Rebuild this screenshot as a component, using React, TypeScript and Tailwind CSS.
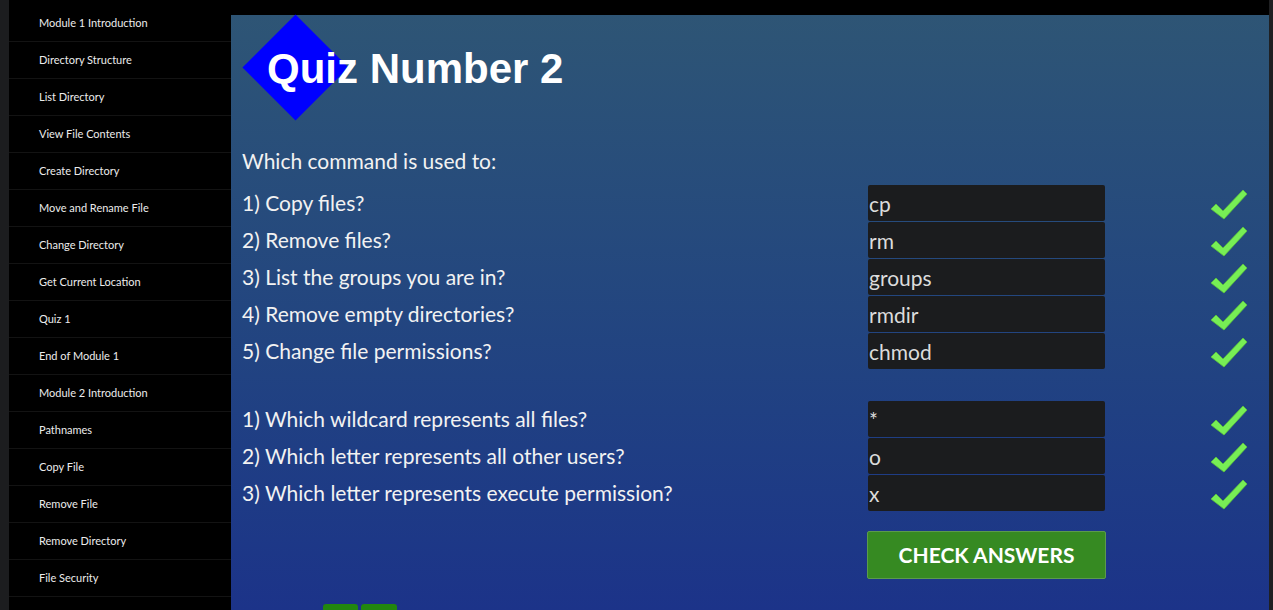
import React from 'react';

const lessons = [
  'Module 1 Introduction',
  'Directory Structure',
  'List Directory',
  'View File Contents',
  'Create Directory',
  'Move and Rename File',
  'Change Directory',
  'Get Current Location',
  'Quiz 1',
  'End of Module 1',
  'Module 2 Introduction',
  'Pathnames',
  'Copy File',
  'Remove File',
  'Remove Directory',
  'File Security',
  '',
];

const commands = [
  { q: '1) Copy files?', a: 'cp' },
  { q: '2) Remove files?', a: 'rm' },
  { q: '3) List the groups you are in?', a: 'groups' },
  { q: '4) Remove empty directories?', a: 'rmdir' },
  { q: '5) Change file permissions?', a: 'chmod' },
];

const symbols = [
  { q: '1) Which wildcard represents all files?', a: '*' },
  { q: '2) Which letter represents all other users?', a: 'o' },
  { q: '3) Which letter represents execute permission?', a: 'x' },
];

const Tick = () => (
  <svg width="37" height="30" viewBox="0 0 37 30">
    <polygon
      points="0,19 5,14 12,21 32,0 36,4 13,29"
      fill="#77ee55"
      stroke="#5cc43c"
      strokeWidth="0.8"
      strokeLinejoin="round"
    />
  </svg>
);

const QuizRow = ({ q, a }: { q: string; a: string }) => (
  <div className="flex items-center h-[36px] mb-px">
    <div className="w-[626px] text-[21px] text-[#f2f2f2]">{q}</div>
    <input
      readOnly
      defaultValue={a}
      className="w-[237px] h-[36px] bg-[#1b1c1e] rounded-[2px] pl-px text-[21px] text-[#dcdcdc] outline-none"
      style={{ fontFamily: 'Lato, sans-serif' }}
    />
    <div className="ml-[106px] pt-[4px]">
      <Tick />
    </div>
  </div>
);

export default function App() {
  return (
    <div
      className="flex h-[610px] w-[1273px] overflow-hidden bg-black"
      style={{ fontFamily: 'Lato, "Open Sans", sans-serif' }}
    >
      <div className="w-[9px] bg-[#1c1d1f]" />

      {/* Sidebar */}
      <nav className="w-[222px] bg-black pt-[5px]">
        {lessons.map((item, i) => (
          <div
            key={i}
            className="h-[37px] border-b border-[#131313] pl-[30px] flex items-center text-[11px] text-[#ececec]"
          >
            {item}
          </div>
        ))}
      </nav>

      {/* Main */}
      <div className="w-[1038px] pt-[15px]">
        <main className="h-full bg-gradient-to-b from-[#2e5575] to-[#1c3389] px-[11px]">
          <div className="relative h-[105px]">
            <div className="absolute left-[16px] top-[15px] w-[75px] h-[75px] bg-[#0000ff] rotate-45" />
            <h1
              className="absolute left-[25px] top-[33px] text-[42px] font-bold text-white leading-none"
              style={{ fontFamily: '"Liberation Sans", Arial, sans-serif' }}
            >
              Quiz Number 2
            </h1>
          </div>

          <div className="mt-[22px] h-[37px] flex items-center text-[21px] text-[#f2f2f2]">
            Which command is used to:
          </div>

          <div className="mt-[6px]">
            {commands.map((c) => (
              <QuizRow key={c.q} q={c.q} a={c.a} />
            ))}
          </div>

          <div className="mt-[32px]">
            {symbols.map((c) => (
              <QuizRow key={c.q} q={c.q} a={c.a} />
            ))}
          </div>

          <div className="mt-[20px] pl-[625px]">
            <button className="w-[239px] h-[48px] bg-[#368a22] border border-[#5c9a4c] rounded-[2px] text-white text-[21px] font-bold uppercase">
              Check Answers
            </button>
          </div>

          <div className="mt-[25px] pl-[81px] flex gap-[3px]">
            <div className="w-[35px] h-[20px] bg-[#22870f] rounded-t-[3px]" />
            <div className="w-[36px] h-[20px] bg-[#22870f] rounded-t-[3px]" />
          </div>
        </main>
      </div>

      <div className="w-[4px] bg-[#1f2022]" />
    </div>
  );
}
